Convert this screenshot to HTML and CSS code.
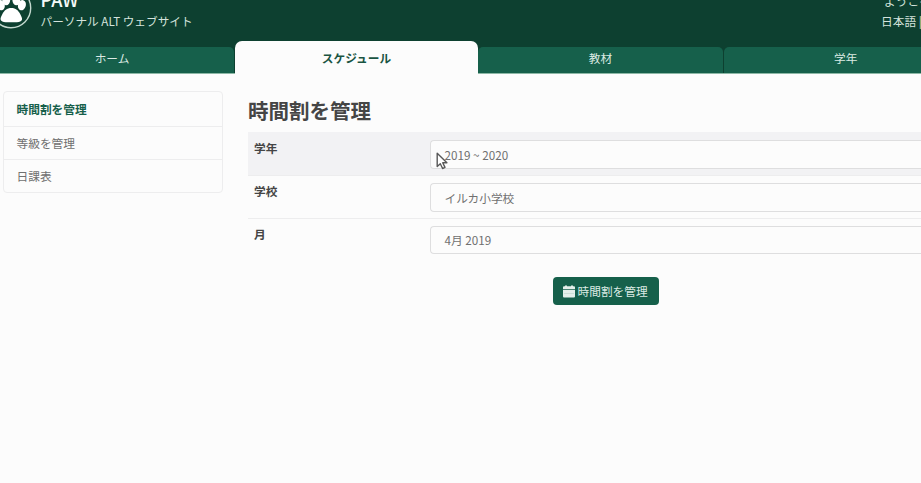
FILE: index.html
```html
<!DOCTYPE html>
<html lang="ja">
<head>
<meta charset="utf-8">
<title>PAW</title>
<link rel="stylesheet" href="styles.css">
</head>
<body>
<header class="header">
  <svg class="logo" viewBox="0 0 42 42">
    <circle cx="21" cy="21" r="19.7" fill="none" stroke="#c3d8ce" stroke-width="1.400"/>
    <g fill="#fff">
      <ellipse cx="16.2" cy="12.8" rx="4" ry="5.500"/>
      <ellipse cx="26.4" cy="12.8" rx="4" ry="5.500"/>
      <ellipse cx="10.800" cy="18.200" rx="3.900" ry="5.200" transform="rotate(-15 10.8 18.2)"/>
      <ellipse cx="31.900" cy="18.200" rx="3.900" ry="5.200" transform="rotate(15 31.9 18.2)"/>
      <path d="M21.300 21c4.500 0 7 2.500 9 6.200 1.700 3.200 2.400 5.200 1 6.600-1.700 1.700-5 1.400-10 1.400s-8.300.3-10-1.400c-1.400-1.400-.7-3.400 1-6.600 2-3.700 4.500-6.200 9-6.200z"/>
    </g>
  </svg>
  <div class="brand">
    <div class="name">PAW</div>
    <div class="tagline">パーソナル ALT ウェブサイト</div>
  </div>
  <div class="account">
    <div class="welcome">ようこそ</div>
    <div class="language">日本語 |</div>
  </div>
</header>
<nav class="tabs">
  <a class="tab">ホーム</a>
  <a class="tab active">スケジュール</a>
  <a class="tab">教材</a>
  <a class="tab">学年</a>
</nav>
<div class="layout">
  <aside class="side">
    <a class="side-item current">時間割を管理</a>
    <a class="side-item">等級を管理</a>
    <a class="side-item">日課表</a>
  </aside>
  <main class="main">
    <h1>時間割を管理</h1>
    <div class="row shaded"><label>学年</label><div class="field">2019 ~ 2020
      <svg class="cursor" viewBox="0 0 12 18"><path d="M1.200 1.200v13.300l3.100-2.800 2.300 4.800 2.400-1.100-2.300-4.600h4.200z" fill="#fff" stroke="#585858" stroke-width="1.400" stroke-linejoin="round"/></svg>
    </div></div>
    <div class="row"><label>学校</label><div class="field">イルカ小学校</div></div>
    <div class="row"><label>月</label><div class="field">4月 2019</div></div>
    <button class="submit">
      <svg class="calendar" viewBox="0 0 12 13"><path d="M0 4V2.300Q0 1.300 1 1.300h1V.5h2v.8h4V.5h2v.8h1q1 0 1 1V4zM0 4.800h12v6.700q0 1-1 1H1q-1 0-1-1z" fill="#e4efea"/><path d="M1 8.500h10" stroke="#c2d8ce" stroke-width=".7"/></svg>
      <span>時間割を管理</span>
    </button>
  </main>
</div>
</body>
</html>
```
FILE: styles.css
```css
* { box-sizing: border-box; }
body {
  margin: 0;
  height: 483px;
  overflow: hidden;
  background: #fcfcfc;
  color: #707070;
  font: 11.7px/18px "Noto Sans CJK JP", sans-serif;
}
.header {
  display: flex;
  align-items: flex-end;
  height: 47px;
  padding-bottom: 17px;
  overflow: hidden;
  background: #0d4030;
  color: #d4e3dc;
  white-space: nowrap;
}
.logo { flex: none; width: 42px; height: 42px; margin: 0 8.500px 1px -10px; }
.name { color: #f5faf7; font-size: 18px; font-weight: 500; line-height: 25px; }
.tagline { font-size: 11.650px; }
.account { width: 40px; margin-left: auto; line-height: 20px; }
.welcome { padding-left: 3px; }
.language { margin-bottom: -1px; }
.tabs {
  display: grid;
  grid-template-columns: 245px 243px 246px 1fr;
  height: 27px;
  margin-left: -10px;
  background: #0d4030;
  border-bottom: 1px solid #8db8a6;
}
.tab {
  height: 26px;
  margin-right: 1px;
  border-radius: 5px 5px 0 0;
  background: #16604b;
  color: #dcebe4;
  line-height: 22px;
  text-align: center;
}
.tab:last-child { margin-right: 0; padding-left: 110px; border-top-right-radius: 0; text-align: left; }
.tab.active {
  height: 33px;
  margin: -6px 0 0;
  border-radius: 7px 7px 0 0;
  background: #fcfcfc;
  color: #195442;
  font-weight: 700;
  line-height: 34px;
}
.layout { display: flex; }
.side {
  flex: none;
  width: 220px;
  height: 102px;
  margin: 17px 25px 0 3px;
  border: 1px solid #ededee;
  border-radius: 4px;
}
.side-item { display: block; height: 33.500px; padding-left: 12.500px; line-height: 32px; }
.side-item.current { line-height: 33px; }
.side-item + .side-item { border-top: 1px solid #ededee; }
.current { color: #16604b; font-weight: 700; }
.main { flex: 1; }
h1 {
  height: 58px;
  margin: 0;
  padding-top: 20px;
  color: #454545;
  font-size: 20.500px;
  font-weight: 700;
  line-height: 32px;
}
.row {
  display: flex;
  height: 42.700px;
  padding: 7px 0 7px 6px;
  border-top: 1px solid #ededee;
}
.row.shaded { height: 43px; background: #f2f2f4; border-top-color: #f2f2f4; }
.row label { width: 176px; margin-top: -1px; color: #454545; font-weight: 700; }
.field {
  position: relative;
  flex: 1;
  height: 28.500px;
  padding: 0 13.500px;
  border: 1px solid #dededf;
  border-right: 0;
  border-radius: 4px 0 0 4px;
  background: #fcfcfc;
  line-height: 27px;
}
.row:nth-child(4) .field { line-height: 26px; }
.cursor { position: absolute; left: 5px; top: 11px; width: 12px; height: 18px; }
.submit {
  display: flex;
  align-items: center;
  width: 106px;
  height: 28px;
  margin: 17px 0 0 304.500px;
  padding: 0 0 0 10px;
  gap: 3px;
  border: 0;
  border-radius: 4px;
  background: #16604b;
  color: #dcebe4;
  font: inherit;
  white-space: nowrap;
}
.calendar { width: 12px; height: 13px; }
```
